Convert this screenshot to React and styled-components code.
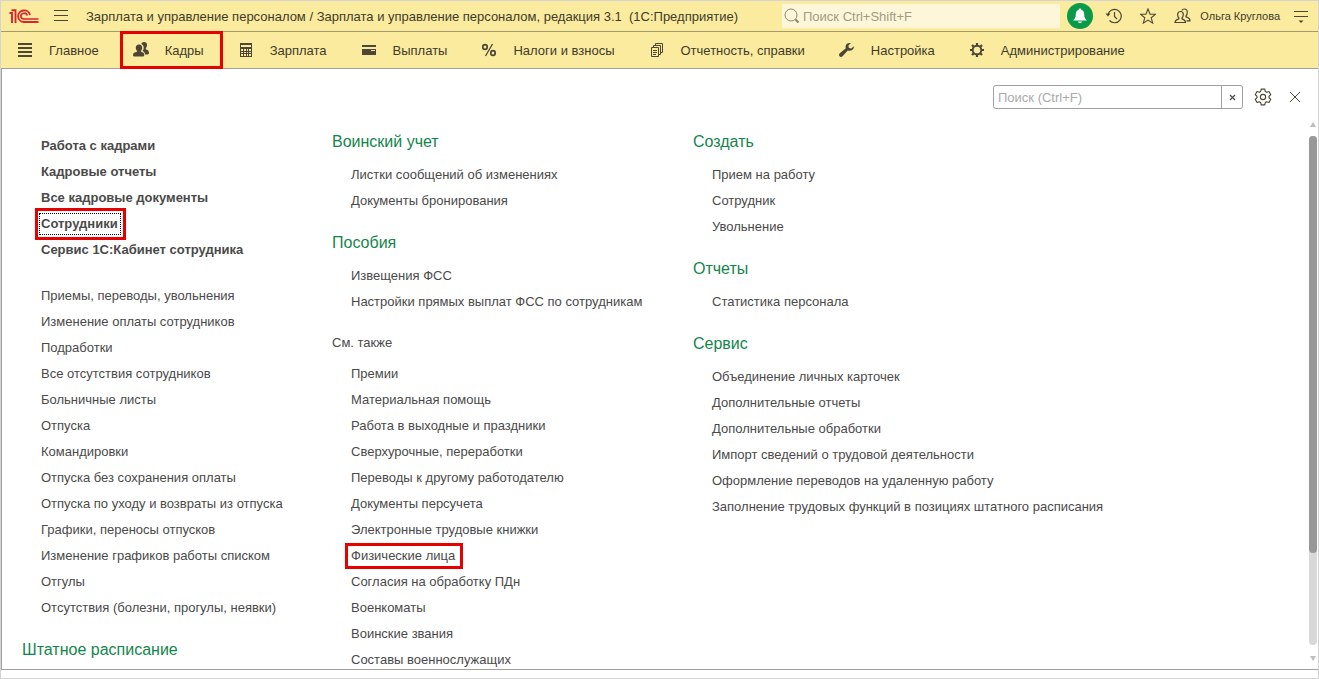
import React from 'react'
import styled, { createGlobalStyle, css } from 'styled-components'

const GlobalStyle = createGlobalStyle`
  * {
    box-sizing: border-box;
  }

  body {
    margin: 0;
    background: #fff;
    color: #4a4a4a;
    font-family: "Liberation Sans", Arial, sans-serif;
    font-size: 13px;
  }

  button, input {
    font: inherit;
    color: inherit;
  }

  a {
    color: inherit;
    text-decoration: none;
  }
`

const Window = styled.div`
  height: 100vh;
  display: flex;
  flex-direction: column;
  border: 1px solid #d4d4d4;
  padding-bottom: 8px;
`

const TitleBar = styled.header`
  flex: none;
  display: flex;
  align-items: center;
  height: 31px;
  padding: 0 10px 0 8px;
  background: #faeb9e;
  border-bottom: 1px solid #a39b6c;
`

const IconButton = styled.button`
  flex: none;
  display: flex;
  align-items: center;
  justify-content: center;
  width: ${({ $width }) => $width || 34}px;
  height: 26px;
  padding: 0;
  border: 0;
  background: none;
  color: #4b4636;
`

const AppTitle = styled.h1`
  flex: none;
  margin: 0 0 0 3px;
  font-size: 13px;
  font-weight: 400;
  color: #3f3b2c;
  white-space: nowrap;
`

const GlobalSearch = styled.label`
  flex: 1;
  display: flex;
  align-items: center;
  gap: 3px;
  height: 24px;
  margin-left: 44px;
  padding-left: 2px;
  background: #fef6d8;
  color: #8d8871;

  input {
    flex: 1;
    min-width: 0;
    padding: 0;
    border: 0;
    outline: 0;
    background: none;
    font-size: 13px;
  }

  input::placeholder {
    color: #a19c85;
    opacity: 1;
  }
`

const Bell = styled.button`
  flex: none;
  display: flex;
  align-items: center;
  justify-content: center;
  width: 26px;
  height: 26px;
  margin: 0 4px 0 7px;
  padding: 0;
  border: 0;
  border-radius: 50%;
  background: #0a9b4a;
`

const UserName = styled.a`
  flex: none;
  margin: 0 14px 0 1px;
  font-size: 11px;
  color: #3f3b2c;
`

const Sections = styled.nav`
  flex: none;
  display: flex;
  gap: 32px;
  height: 37px;
  padding-left: 14px;
  background: #faeb9e;
  border-bottom: 1px solid #a0a0a0;
`

const Section = styled.a`
  position: relative;
  display: flex;
  align-items: center;
  gap: 14px;
  font-size: 13px;
  color: #3f3b2c;
  white-space: nowrap;

  svg {
    flex: none;
    color: #4b4636;
  }

  ${({ $marked }) => $marked && css`
    &::after {
      content: "";
      position: absolute;
      inset: -1px -19px -1px -11px;
      border: 3px solid #e60000;
    }
  `}
`

const Panel = styled.main`
  flex: 1;
  min-height: 0;
  display: flex;
  flex-direction: column;
  border-left: 1px solid #a0a0a0;
  border-bottom: 1px solid #a0a0a0;
`

const Tools = styled.div`
  flex: none;
  display: flex;
  justify-content: flex-end;
  align-items: center;
  height: 24px;
  margin-top: 16px;
  padding-right: 7px;
`

const PanelSearch = styled.form`
  display: flex;
  width: 250px;
  height: 24px;
  margin-right: 4px;
  border: 1px solid #a0a0a0;
  border-radius: 3px;

  input {
    flex: 1;
    min-width: 0;
    padding: 0 4px;
    border: 0;
    outline: 0;
    background: none;
    font-size: 13px;
  }

  input::placeholder {
    color: #aaa;
    opacity: 1;
  }

  button {
    display: flex;
    align-items: center;
    justify-content: center;
    width: 21px;
    padding: 0;
    border: 0;
    border-left: 1px solid #a0a0a0;
    background: none;
  }
`

const Content = styled.div`
  flex: 1;
  min-height: 0;
  display: flex;
  justify-content: space-between;
`

const Columns = styled.div`
  display: grid;
  grid-template-columns: 310px 361px auto;
  padding: 20px 0 0 20px;
  overflow: hidden;
`

const Heading = styled.h2`
  margin: 0 0 7px;
  font-size: 16px;
  font-weight: 400;
  line-height: 26px;
  color: #12864c;
`

const SeeAlso = styled.h3`
  margin: -1px 0 5px;
  font-size: 13px;
  font-weight: 400;
  line-height: 26px;
`

const Links = styled.ul`
  margin: 0 0 ${({ $gap }) => $gap || 16}px;
  padding: 0 0 0 19px;
  list-style: none;
  font-weight: ${({ $bold }) => ($bold ? 700 : 400)};
  line-height: 26px;
  white-space: nowrap;
`

const Spacer = styled.div`
  height: 4px;
`

const Link = styled.a`
  position: relative;
  display: inline-block;

  ${({ $focused }) => $focused && css`
    &::before {
      content: "";
      position: absolute;
      inset: 2px -3px 2px -2px;
      border: 1px dotted #000;
    }
  `}

  ${({ $marked }) => $marked && css`
    &::after {
      content: "";
      position: absolute;
      inset: ${$marked};
      border: 3px solid #e60000;
    }
  `}
`

const Scrollbar = styled.div`
  flex: none;
  display: flex;
  flex-direction: column;
  align-items: center;
  width: 8px;
  margin: 13px 1px 8px 0;
`

const Track = styled.div`
  flex: 1;
  width: 8px;
  margin: 9px 0 11px;
  border-radius: 4px;
  background: #d8d8d8;
`

const Thumb = styled.div`
  height: 82%;
  border-radius: 4px;
  background: #989898;
`

const Arrow = ({ down }) => (
  <svg width="6" height="5" viewBox="0 0 6 5" fill="#bdbdbd">
    <path d={down ? 'M0 0h6L3 5z' : 'M0 5h6L3 0z'} />
  </svg>
)

const Logo = () => (
  <svg width="30" height="16" viewBox="0 0 30 16" fill="none" stroke="#d9262c">
    <path d="M.5 5H3V15M2.500 2.300H6.500V15" strokeWidth="1.900" />
    <path d="M21 7A6 5.800 0 1 0 15 14H29.500" strokeWidth="1.900" />
    <path d="M18.200 7.500A3.200 2.900 0 1 0 15 11H29.500" strokeWidth="1.700" />
  </svg>
)

const Burger = () => (
  <svg width="14" height="14" viewBox="0 0 14 14" stroke="currentColor">
    <path d="M0 1.500h14M0 6.500h14M0 11.500h14" />
  </svg>
)

const Magnifier = () => (
  <svg width="16" height="16" viewBox="0 0 16 16" fill="none" stroke="currentColor">
    <circle cx="7" cy="7" r="6" />
    <path d="M11.500 11.500l3 3" strokeWidth="2.200" />
  </svg>
)

const BellIcon = () => (
  <svg width="16" height="16" viewBox="0 0 16 16" fill="#fff">
    <path d="M8 .5c.8 0 1.300.5 1.300 1.200 2 .6 2.900 2.300 2.900 4.500 0 3 .9 4.800 2.800 6.300H1c1.900-1.500 2.800-3.300 2.800-6.300 0-2.200.9-3.900 2.900-4.500C6.700 1 7.200.5 8 .5zM6 13.500h4c-.2 1-1 1.700-2 1.700s-1.800-.7-2-1.700z" />
  </svg>
)

const HistoryIcon = () => (
  <svg width="18" height="16" viewBox="0 0 18 16" fill="none" stroke="currentColor" strokeWidth="1.200">
    <path d="M3 6.500A6.700 6.700 0 1 1 4.500 12.500M9.500 4v4.500l2.500 2.500" />
    <path d="M.5 5.500h5L3 8.500z" fill="currentColor" stroke="none" />
  </svg>
)

const StarIcon = () => (
  <svg width="16" height="16" viewBox="0 0 16 16" fill="none" stroke="currentColor" strokeWidth="1.100">
    <path d="M8 .9l2 5.200 5.400.2-4.200 3.500 1.500 5.300L8 12.100l-4.700 3 1.500-5.300L.6 6.300 6 6.100z" />
  </svg>
)

const UsersIcon = () => (
  <svg width="17" height="16" viewBox="0 0 17 16" fill="none" stroke="currentColor" strokeWidth="1.200">
    <path d="M6.500 3.500c1.900 0 2.800 1.300 2.800 3 0 1.500-.5 2.600-1.300 3.300v1.100c2 .7 3.500 1.400 3.500 3.600H1c0-2.200 1.800-2.900 3.800-3.600V9.800c-.8-.7-1.200-1.800-1.200-3.300 0-1.700 1-3 2.900-3z" />
    <path d="M7.800 2.500C8.300 1.500 9.200 1 10.300 1c2 0 3 1.400 3 3.200 0 1.600-.5 2.800-1.300 3.500v1.200c2 .6 4 1.500 4 3.900h-3.500" />
  </svg>
)

const ServiceIcon = () => (
  <svg width="14" height="16" viewBox="0 0 14 16" stroke="currentColor">
    <path d="M0 3.500h14M0 8.500h14" strokeWidth="1.200" />
    <path d="M4.500 12.500h5L7 15z" fill="currentColor" stroke="none" />
  </svg>
)

const ClearIcon = () => (
  <svg width="7" height="7" viewBox="0 0 7 7" stroke="currentColor">
    <path d="M1 1l5 5M6 1L1 6" strokeWidth="1.200" />
  </svg>
)

const GearOutline = () => (
  <svg width="18" height="18" viewBox="0 0 24 24" fill="none" stroke="currentColor" strokeWidth="1.500" strokeLinejoin="round">
    <path d="M9.600 1.500h4.800l.7 3.200 1.800 1 3.100-1 2.400 4.200-2.400 2.100v2l2.400 2.100-2.400 4.200-3.100-1-1.800 1-.7 3.200H9.600l-.7-3.200-1.800-1-3.100 1-2.400-4.200L4 13v-2L1.600 8.900 4 4.700l3.100 1 1.800-1z" />
    <circle cx="12" cy="12" r="3.500" />
  </svg>
)

const CloseIcon = () => (
  <svg width="12" height="12" viewBox="0 0 12 12" stroke="currentColor">
    <path d="M1 1l10 10M11 1L1 11" />
  </svg>
)

const sectionIcons = {
  main: <path d="M3 4h14M3 8h14M3 12h14M3 16h14" stroke="currentColor" strokeWidth="2" />,
  staff: (
    <g fill="currentColor">
      <path d="M13 2c2.100 0 3 1.300 3 3 0 1.400-.5 2.400-1.200 3.100v1.100c1.900.7 3.200 1.500 3.200 3.600 0 1-.6 1.600-1.500 1.600h-2.300c-.4-1.600-1.300-2.600-2.700-3.300.8-.9 1.200-2 1.200-3.400 0-1.800-.8-3.100-2.300-3.800C10.800 2.700 11.600 2 13 2z" />
      <path d="M8 4.500c2.200 0 3.200 1.400 3.200 3.200 0 1.400-.5 2.400-1.200 3.100v.9c2 .6 3.300 1.300 3.300 3.300 0 .9-.5 1.500-1.400 1.500H3.400c-.9 0-1.400-.6-1.400-1.500 0-2 1.700-2.700 4-3.300v-.9c-.8-.7-1.200-1.700-1.200-3.100 0-1.800 1-3.200 3.200-3.200z" />
    </g>
  ),
  salary: (
    <path fillRule="evenodd" fill="currentColor" d="M4 3h12v14H4zM5 5v2h10V5zM5 9v2h2V9zM8 9v2h2V9zM11 9v2h1V9zM13 9v2h2V9zM5 12v1h2v-1zM8 12v1h2v-1zM11 12v1h1v-1zM13 12v1h2v-1zM5 14v2h2v-2zM8 14v2h2v-2zM11 14v2h1v-2zM13 14v2h2v-2z" />
  ),
  payments: (
    <path fill="currentColor" fillRule="evenodd" d="M3 5h14v2H3zM3 9h14v6H3zM12 10v1h4v-1z" />
  ),
  taxes: (
    <g fill="none" stroke="currentColor">
      <ellipse cx="6" cy="7" rx="2.200" ry="2.400" strokeWidth="1.700" />
      <ellipse cx="14" cy="13" rx="2.200" ry="2.400" strokeWidth="1.700" />
      <path d="M13.500 4L6.500 16" strokeWidth="1.300" />
    </g>
  ),
  reports: (
    <g fill="none" stroke="currentColor">
      <path d="M4.500 7.500h7v9h-7zM6.500 7V5.500h7v9H12M8.500 5V3.500h7v9H14M6 10.500h4M6 12.500h4M6 14.500h3" />
    </g>
  ),
  setup: (
    <path fill="currentColor" d="M16.800 6.300l-2.500 2.200-2.400-.6-.5-2.300 2.400-2.400c-2-.6-4.200.2-5 2.200-.4 1-.4 2 0 2.900l-6 5c-1 .8-1 2.200-.2 3s2.100.8 2.900-.1l5.300-5.800c1.900.8 4.200.3 5.400-1.300.6-.8.8-1.800.6-2.800z" />
  ),
  admin: (
    <g fill="none" stroke="currentColor">
      <circle cx="10" cy="10" r="4.300" strokeWidth="1.900" />
      <path d="M10 3v3M10 14v3M3 10h3M14 10h3M5 5l2 2M13 13l2 2M15 5l-2 2M7 13l-2 2" strokeWidth="2.200" />
    </g>
  ),
}

const sections = [
  { title: 'Главное', icon: 'main' },
  { title: 'Кадры', icon: 'staff', marked: true },
  { title: 'Зарплата', icon: 'salary' },
  { title: 'Выплаты', icon: 'payments' },
  { title: 'Налоги и взносы', icon: 'taxes' },
  { title: 'Отчетность, справки', icon: 'reports' },
  { title: 'Настройка', icon: 'setup' },
  { title: 'Администрирование', icon: 'admin' },
]

const mainLinks = [
  'Работа с кадрами',
  'Кадровые отчеты',
  'Все кадровые документы',
  'Сотрудники',
  'Сервис 1С:Кабинет сотрудника',
]

const staffLinks = [
  'Приемы, переводы, увольнения',
  'Изменение оплаты сотрудников',
  'Подработки',
  'Все отсутствия сотрудников',
  'Больничные листы',
  'Отпуска',
  'Командировки',
  'Отпуска без сохранения оплаты',
  'Отпуска по уходу и возвраты из отпуска',
  'Графики, переносы отпусков',
  'Изменение графиков работы списком',
  'Отгулы',
  'Отсутствия (болезни, прогулы, неявки)',
]

const militaryLinks = ['Листки сообщений об изменениях', 'Документы бронирования']

const benefitLinks = ['Извещения ФСС', 'Настройки прямых выплат ФСС по сотрудникам']

const seeAlsoLinks = [
  'Премии',
  'Материальная помощь',
  'Работа в выходные и праздники',
  'Сверхурочные, переработки',
  'Переводы к другому работодателю',
  'Документы персучета',
  'Электронные трудовые книжки',
  'Физические лица',
  'Согласия на обработку ПДн',
  'Военкоматы',
  'Воинские звания',
  'Составы военнослужащих',
]

const createLinks = ['Прием на работу', 'Сотрудник', 'Увольнение']

const reportLinks = ['Статистика персонала']

const serviceLinks = [
  'Объединение личных карточек',
  'Дополнительные отчеты',
  'Дополнительные обработки',
  'Импорт сведений о трудовой деятельности',
  'Оформление переводов на удаленную работу',
  'Заполнение трудовых функций в позициях штатного расписания',
]

// red frames round the commands that the user has to open
const frames = {
  'Сотрудники': '-3px -8px -3px -6px',
  'Физические лица': '0 -8px 0 -6px',
}

const LinkList = ({ items, ...rest }) => (
  <Links {...rest}>
    {items.map(item => (
      <li key={item}>
        <Link href="#" $marked={frames[item]} $focused={item === 'Сотрудники'}>{item}</Link>
      </li>
    ))}
  </Links>
)

const App = () => (
  <>
    <GlobalStyle />
    <Window>
      <TitleBar>
        <Logo />
        <IconButton $width={44} aria-label="Меню"><Burger /></IconButton>
        <AppTitle>Зарплата и управление персоналом / Зарплата и управление персоналом, редакция 3.1 &nbsp;(1С:Предприятие)</AppTitle>
        <GlobalSearch>
          <Magnifier />
          <input type="text" placeholder="Поиск Ctrl+Shift+F" aria-label="Поиск" />
        </GlobalSearch>
        <Bell aria-label="Уведомления"><BellIcon /></Bell>
        <IconButton aria-label="История"><HistoryIcon /></IconButton>
        <IconButton aria-label="Избранное"><StarIcon /></IconButton>
        <IconButton aria-label="Пользователи"><UsersIcon /></IconButton>
        <UserName href="#">Ольга Круглова</UserName>
        <IconButton $width={14} aria-label="Сервис и настройки"><ServiceIcon /></IconButton>
      </TitleBar>

      <Sections>
        {sections.map(({ title, icon, marked }) => (
          <Section key={icon} href="#" $marked={marked}>
            <svg width="20" height="20" viewBox="0 0 20 20">{sectionIcons[icon]}</svg>
            {title}
          </Section>
        ))}
      </Sections>

      <Panel>
        <Tools>
          <PanelSearch>
            <input type="text" placeholder="Поиск (Ctrl+F)" aria-label="Поиск по меню" />
            <button type="button" aria-label="Очистить"><ClearIcon /></button>
          </PanelSearch>
          <IconButton $width={32} aria-label="Настройка"><GearOutline /></IconButton>
          <IconButton $width={32} aria-label="Закрыть"><CloseIcon /></IconButton>
        </Tools>

        <Content>
          <Columns>
            <div>
              <Spacer />
              <LinkList items={mainLinks} $bold $gap={20} />
              <LinkList items={staffLinks} />
              <Heading>Штатное расписание</Heading>
            </div>
            <div>
              <Heading>Воинский учет</Heading>
              <LinkList items={militaryLinks} />
              <Heading>Пособия</Heading>
              <LinkList items={benefitLinks} />
              <SeeAlso>См. также</SeeAlso>
              <LinkList items={seeAlsoLinks} />
            </div>
            <div>
              <Heading>Создать</Heading>
              <LinkList items={createLinks} />
              <Heading>Отчеты</Heading>
              <LinkList items={reportLinks} />
              <Heading>Сервис</Heading>
              <LinkList items={serviceLinks} />
            </div>
          </Columns>
          <Scrollbar>
            <Arrow />
            <Track><Thumb /></Track>
            <Arrow down />
          </Scrollbar>
        </Content>
      </Panel>
    </Window>
  </>
)

export default App
